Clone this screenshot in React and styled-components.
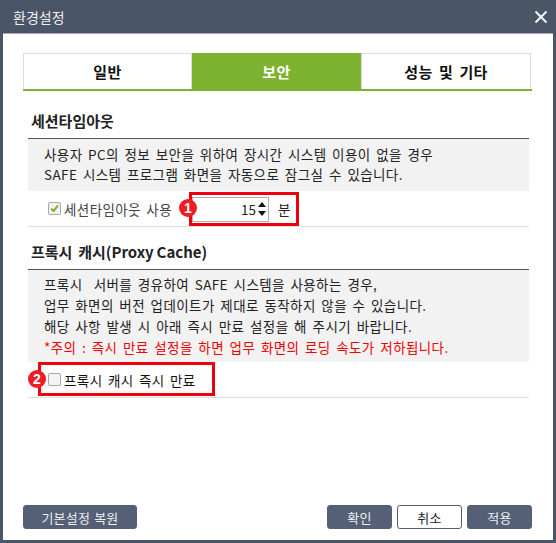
import styled, { createGlobalStyle } from "styled-components";

const Global = createGlobalStyle`
  html, body {
    margin: 0;
    padding: 0;
    background: #4a5568;
  }
  * {
    box-sizing: border-box;
  }
`;

const Window = styled.div`
  width: 556px;
  height: 543px;
  display: flex;
  flex-direction: column;
  background: #4a5568;
  font-family: "Noto Sans CJK KR", "Liberation Sans", sans-serif;
  font-size: 13px;
  color: #222;
  padding: 0 3px 3px;
`;

const TitleBar = styled.div`
  height: 33px;
  flex-shrink: 0;
  display: flex;
  align-items: center;
  justify-content: space-between;
  padding: 0 5px 0 10px;
  color: #eef0f3;
  font-size: 14px;
`;

const CloseButton = styled.svg`
  width: 14px;
  height: 14px;
  display: block;
`;

const Body = styled.div`
  flex: 1;
  display: flex;
  flex-direction: column;
  background: #fff;
  border-top: 1px solid #a4a8b0;
  padding: 19px 21px 11px 20px;
`;

const Tabs = styled.div`
  display: grid;
  grid-template-columns: 169px 169px 170px;
  height: 38px;
  flex-shrink: 0;
  border-bottom: 2px solid #7db32f;
`;

const Tab = styled.div`
  display: flex;
  align-items: center;
  justify-content: center;
  font-size: 15px;
  font-weight: 700;
  letter-spacing: 0.4px;
  word-spacing: 2.5px;
  color: ${({ $active }) => ($active ? "#fff" : "#111")};
  background: ${({ $active }) => ($active ? "#7db32f" : "#fff")};
  border: ${({ $active }) => ($active ? "none" : "1px solid #dedede")};
  border-bottom: none;
`;

const Section = styled.section`
  margin: 0 3px 0 5px;
`;

const SectionTitle = styled.h2`
  margin: 0;
  height: ${({ $height }) => $height}px;
  padding: 0 0 7px 3px;
  display: flex;
  align-items: flex-end;
  font-size: 15px;
  font-weight: 700;
  word-spacing: -0.5px;
  color: #222;
  white-space: pre;
  border-bottom: 1px solid #555;
`;

const Note = styled.div`
  background: #f2f2f2;
  padding: ${({ $padding }) => $padding};
  line-height: ${({ $lineHeight }) => $lineHeight}px;
  font-size: 13.5px;
  letter-spacing: 0.4px;
  word-spacing: 2.2px;
  color: #222;
  white-space: pre;
`;

const Warning = styled.div`
  color: #f00000;
`;

const OptionRow = styled.div`
  height: 36px;
  display: flex;
  align-items: center;
  border-bottom: 1px solid #dedede;
  padding-left: 20px;
  position: relative;
`;

const CheckBox = styled.span`
  width: 13px;
  height: 13px;
  flex-shrink: 0;
  border: 1px solid #a8a8a8;
  border-radius: 2px;
  background: #f4f4f4;
  display: flex;
  align-items: center;
  justify-content: center;
  margin-right: 3px;
`;

const CheckLabel = styled.span`
  color: ${({ $muted }) => ($muted ? "#444" : "#111")};
  font-size: 13.5px;
  letter-spacing: 0.4px;
  word-spacing: 2px;
  white-space: nowrap;
`;

const Highlight = styled.div`
  display: flex;
  align-items: center;
  border: 3px solid #f0000f;
  position: absolute;
  left: ${({ $left }) => $left}px;
  top: ${({ $top }) => $top}px;
  width: ${({ $width }) => $width}px;
  height: ${({ $height }) => $height}px;
`;

const Badge = styled.span`
  position: absolute;
  left: ${({ $left }) => $left}px;
  top: ${({ $top }) => $top}px;
  width: 18px;
  height: 18px;
  border-radius: 50%;
  background: #ee1c25;
  color: #fff;
  font-family: "Liberation Sans", sans-serif;
  font-size: 14px;
  font-weight: 700;
  display: flex;
  align-items: center;
  justify-content: center;
`;

const Spinner = styled.div`
  width: 77px;
  height: 25px;
  border: 1px solid #b0b0b0;
  display: flex;
  align-items: center;
  justify-content: flex-end;
  font-size: 13.5px;
  color: #222;
  gap: 2px;
  padding-right: 2px;
`;

const Arrows = styled.svg`
  width: 8px;
  height: 16px;
  display: block;
`;

const Unit = styled.span`
  margin-left: 9px;
  font-size: 13.5px;
`;

const Footer = styled.div`
  margin-top: auto;
  display: flex;
  align-items: center;
  gap: 5px;
`;

const Button = styled.button`
  height: 24px;
  width: ${({ $wide }) => ($wide ? "114px" : "65px")};
  margin-right: ${({ $wide }) => ($wide ? "auto" : "0")};
  border-radius: 3px;
  border: 1px solid #555f75;
  background: ${({ $light }) => ($light ? "#fff" : "#555f75")};
  color: ${({ $light }) => ($light ? "#222" : "#eef0f3")};
  font-family: inherit;
  font-size: 13px;
  letter-spacing: 0.2px;
  word-spacing: 1px;
  padding: 0;
`;

export default function App() {
  return (
    <Window>
      <Global />
      <TitleBar>
        <span>환경설정</span>
        <CloseButton viewBox="0 0 14 14">
          <path d="M1.5 1.5 12.5 12.5M12.5 1.5 1.5 12.5" stroke="#f4f5f7" strokeWidth="2" />
        </CloseButton>
      </TitleBar>
      <Body>
        <Tabs>
          <Tab>일반</Tab>
          <Tab $active>보안</Tab>
          <Tab>성능 및 기타</Tab>
        </Tabs>
        <Section>
          <SectionTitle $height={48}>세션타임아웃</SectionTitle>
          <Note $padding="6px 16px 7px" $lineHeight={19.5}>
            사용자 PC의 정보 보안을 위하여 장시간 시스템 이용이 없을 경우
            <br />
            SAFE 시스템 프로그램 화면을 자동으로 잠그실 수 있습니다.
          </Note>
          <OptionRow>
            <CheckBox>
              <svg width="9" height="9" viewBox="0 0 9 9">
                <path d="M1 4.5 3.5 7 8 1.5" fill="none" stroke="#7db32f" strokeWidth="2" />
              </svg>
            </CheckBox>
            <CheckLabel $muted>세션타임아웃 사용</CheckLabel>
            <Highlight $left={161} $top={1} $width={110} $height={34}>
              <Spinner>
                15
                <Arrows viewBox="0 0 8 16">
                  <path d="M4 1 8 6H0ZM4 15 0 10H8Z" fill="#111" />
                </Arrows>
              </Spinner>
              <Unit>분</Unit>
            </Highlight>
            <Badge $left={151} $top={8}>1</Badge>
          </OptionRow>
        </Section>
        <Section>
          <SectionTitle $height={43}>{"프록시  캐시(Proxy Cache)"}</SectionTitle>
          <Note $padding="4px 16px" $lineHeight={21}>
            {"프록시  서버를 경유하여 SAFE 시스템을 사용하는 경우,"}
            <br />
            업무 화면의 버전 업데이트가 제대로 동작하지 않을 수 있습니다.
            <br />
            해당 사항 발생 시 아래 즉시 만료 설정을 해 주시기 바랍니다.
            <Warning>*주의 : 즉시 만료 설정을 하면 업무 화면의 로딩 속도가 저하됩니다.</Warning>
          </Note>
          <OptionRow>
            <CheckBox />
            <CheckLabel>프록시 캐시 즉시 만료</CheckLabel>
            <Highlight $left={10} $top={0} $width={177} $height={34} />
            <Badge $left={0} $top={8}>2</Badge>
          </OptionRow>
        </Section>
        <Footer>
          <Button $wide>기본설정 복원</Button>
          <Button>확인</Button>
          <Button $light>취소</Button>
          <Button>적용</Button>
        </Footer>
      </Body>
    </Window>
  );
}
